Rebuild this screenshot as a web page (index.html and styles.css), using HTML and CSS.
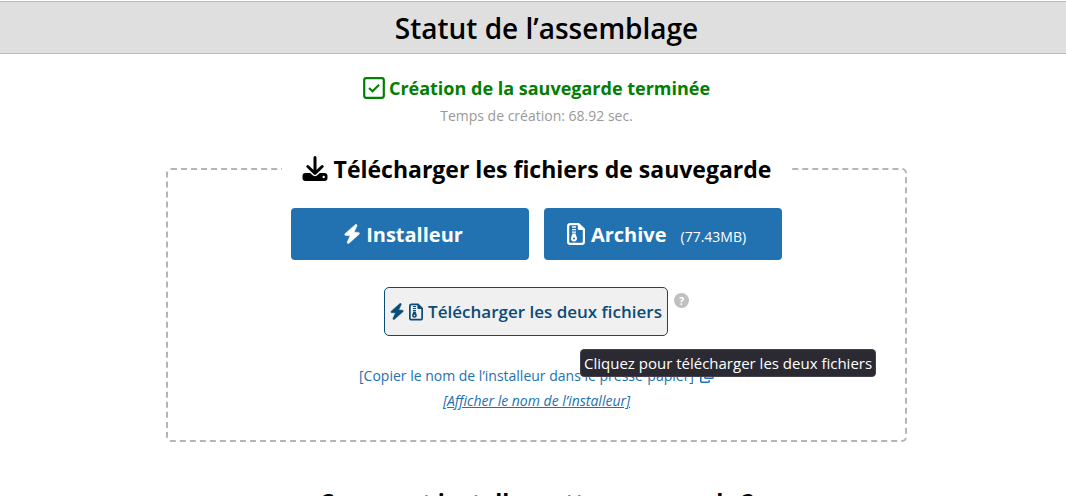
FILE: index.html
```html
<!DOCTYPE html>
<html lang="fr">
  <head>
    <meta charset="UTF-8" />
    <meta name="viewport" content="width=device-width, initial-scale=1.0" />
    <title>Statut de l’assemblage</title>
    <link rel="stylesheet" href="styles.css">
  </head>
  <body>
    <!-- Shared icons -->
    <svg class="icon-defs" aria-hidden="true">
      <symbol id="icon-bolt" viewBox="0 0 16 20">
        <path d="M11.5 0.5 L1.2 9.6 Q0 11 1.6 11.4 L6.2 11.6 L3.2 18.2 Q3.1 20 5 19.2 L15 10.3 Q16.2 9 14.6 8.4 L10 8.2 L13 1.8 Q13.1 0 11.5 0.5 Z" fill="currentColor" stroke="currentColor" stroke-width="0.6" />
      </symbol>
      <symbol id="icon-archive" viewBox="0 0 18 22">
        <path d="M3.3 1.1 H11.5 L16.9 6.3 V18.7 Q16.9 20.9 14.7 20.9 H3.3 Q1.1 20.9 1.1 18.7 V3.3 Q1.1 1.1 3.3 1.1 Z" fill="none" stroke="currentColor" stroke-width="2.2" />
        <path d="M10.8 1 L17 7 H12 Q10.8 7 10.8 5.8 Z" fill="currentColor" />
        <path d="M5 4 H9 M5 6.6 H9 M5 9.2 H9" stroke="currentColor" stroke-width="1.3" />
        <path d="M5.5 10.5 H8.5 L10 15 Q10.2 18.4 7 18.4 Q3.8 18.4 4 15 Z M7 14.4 A1 1 0 1 0 7 16.4 A1 1 0 1 0 7 14.4 Z" fill="currentColor" fill-rule="evenodd" />
      </symbol>
    </svg>

    <header class="page-header">
      <h1>Statut de l’assemblage</h1>
    </header>

    <main class="content">
      <div class="build-status">
        <h2>
          <svg class="icon-check" viewBox="0 0 22 22" aria-hidden="true">
            <rect x="1.2" y="1.2" width="19.6" height="19.6" rx="2" fill="none" stroke="currentColor" stroke-width="2.2" />
            <path d="M6 11 L9.5 14.3 L16 7.8" fill="none" stroke="currentColor" stroke-width="2" />
          </svg>
          Création de la sauvegarde terminée
        </h2>
        <p><strong>Temps de création:</strong> 68.92 sec.</p>
      </div>

      <fieldset class="download-box">
        <legend>
          <svg class="icon-download" viewBox="0 0 26 26" aria-hidden="true">
            <path d="M13 1.5 V17 M5.8 10.5 L13 17.3 L20.2 10.5" fill="none" stroke="currentColor" stroke-width="3" stroke-linecap="round" stroke-linejoin="round" />
            <path d="M3.5 17 H8.2 L11 19.6 Q13 21 15 19.6 L17.8 17 H22.5 Q25.5 17.2 25.5 20 V22 Q25.5 25 22.5 25 H3.5 Q0.5 25 0.5 22 V20 Q0.5 17.2 3.5 17 Z M21.7 19.8 A1.2 1.2 0 1 0 21.7 22.2 A1.2 1.2 0 1 0 21.7 19.8 Z" fill="currentColor" fill-rule="evenodd" />
          </svg>
          Télécharger les fichiers de sauvegarde
        </legend>

        <div class="download-buttons">
          <button type="button" class="btn-primary">
            <svg class="icon-bolt" aria-hidden="true"><use href="#icon-bolt" /></svg>
            Installeur
          </button>
          <button type="button" class="btn-primary">
            <svg class="icon-archive" aria-hidden="true"><use href="#icon-archive" /></svg>
            Archive
            <span class="file-size">(77.43MB)</span>
          </button>
        </div>

        <div class="download-both">
          <button type="button" class="btn-both" aria-describedby="both-tip">
            <svg class="icon-bolt" aria-hidden="true"><use href="#icon-bolt" /></svg>
            <svg class="icon-archive" aria-hidden="true"><use href="#icon-archive" /></svg>
            Télécharger les deux fichiers
          </button>
          <span class="help">?</span>
          <span class="tooltip" id="both-tip" role="tooltip">Cliquez pour télécharger les deux fichiers</span>
        </div>

        <div class="installer-links">
          <a href="#" class="copy-link">[Copier le nom de l’installeur dans le presse-papier]
            <svg class="icon-copy" viewBox="0 0 14 14" aria-hidden="true">
              <rect x="4.8" y="0.8" width="8.4" height="8.4" rx="1" fill="none" stroke="currentColor" stroke-width="1.6" />
              <path d="M2.8 4.8 H1.8 Q0.8 4.8 0.8 5.8 V12.2 Q0.8 13.2 1.8 13.2 H8.2 Q9.2 13.2 9.2 12.2 V11.2" fill="none" stroke="currentColor" stroke-width="1.6" />
            </svg>
          </a>
          <a href="#" class="show-link">[Afficher le nom de l’installeur]</a>
        </div>
      </fieldset>

      <h2 class="install-title">Comment installer cette sauvegarde ?</h2>
    </main>
  </body>
</html>
```
FILE: styles.css
```css
/* Reset */
* {
  margin: 0;
  padding: 0;
  box-sizing: border-box;
}

html {
  overflow: hidden;
}

body {
  font-family: "Segoe UI", "Open Sans", "Noto Sans", sans-serif;
  font-size: 14px;
  color: #000;
  background-color: #fff;
}

button {
  font-family: inherit;
  cursor: pointer;
}

.icon-defs {
  display: none;
}

.page-header {
  margin-top: 1px;
  padding: 2px 0 0 27px;
  background-color: #dfdfdf;
  border-top: 1px solid #bbb;
  border-bottom: 1px solid #bbb;
  text-align: center;
}

h1 {
  font-size: 28px;
  line-height: 49px;
  font-weight: 600;
}

.content {
  padding: 20px 0 0 7px;
}

.build-status {
  text-align: center;
}

.build-status h2 {
  display: flex;
  justify-content: center;
  align-items: center;
  gap: 4px;
  color: #008000;
  font-size: 18px;
  line-height: 28px;
  font-weight: 700;
}

.icon-check {
  width: 22px;
  height: 22px;
}

.build-status p {
  color: #999;
  line-height: 28px;
}

.build-status strong {
  font-weight: 500;
}

/* Download box */
.download-box {
  width: 70%;
  max-width: 741px;
  margin: 22px auto 0;
  padding: 23px 0 27px;
  border: 2px dashed #b5b5b5;
  border-radius: 5px;
}

.download-box legend {
  display: flex;
  align-items: center;
  gap: 6px;
  margin: 0 auto;
  padding: 1px 20px 0;
  font-size: 23px;
  line-height: 32px;
  font-weight: 700;
}

.icon-download {
  width: 26px;
  height: 26px;
}

.download-buttons {
  display: flex;
  justify-content: center;
  gap: 15px;
}

.btn-primary {
  display: flex;
  justify-content: center;
  align-items: center;
  gap: 6px;
  width: 238px;
  height: 52px;
  padding-right: 13px;
  border: none;
  border-radius: 4px;
  background-color: #2271b1;
  color: #fff;
  font-size: 20px;
  font-weight: 700;
}

.icon-bolt {
  width: 16px;
  height: 20px;
}

.icon-archive {
  width: 18px;
  height: 22px;
}

.file-size {
  padding: 4px 0 0 8px;
  font-size: 14px;
  font-weight: 400;
}

.download-both {
  position: relative;
  display: flex;
  justify-content: center;
  align-items: flex-start;
  gap: 6px;
  width: fit-content;
  margin: 27px auto 0;
}

.btn-both {
  display: flex;
  justify-content: center;
  align-items: center;
  gap: 5px;
  min-width: 284px;
  height: 49px;
  padding: 0 4px;
  border: 1px solid #0a4b78;
  border-radius: 5px;
  background-color: #f0f0f0;
  color: #0a4b78;
  font-size: 17px;
  font-weight: 600;
  white-space: nowrap;
}

.btn-both .icon-bolt {
  width: 14px;
  height: 17px;
}

.btn-both .icon-archive {
  width: 14px;
  height: 18px;
}

.help {
  width: 15px;
  height: 15px;
  margin-top: 6px;
  border-radius: 50%;
  background-color: #c0c0c0;
  color: #fff;
  font-size: 11px;
  line-height: 15px;
  font-weight: 700;
  text-align: center;
}

.tooltip {
  position: absolute;
  top: 62px;
  left: 196px;
  padding: 0 3px;
  border: 1px solid #42414d;
  border-radius: 4px;
  background-color: #2b2a33;
  color: #fff;
  font-size: 15px;
  line-height: 26px;
  white-space: nowrap;
}

.installer-links {
  display: flex;
  flex-direction: column;
  align-items: center;
  margin-top: 27px;
  line-height: 25px;
}

.installer-links a {
  color: #2271b1;
}

.copy-link {
  display: flex;
  align-items: center;
  gap: 6px;
  text-decoration: none;
}

.icon-copy {
  width: 14px;
  height: 14px;
}

.show-link {
  font-style: italic;
}

.install-title {
  margin-top: 44px;
  font-size: 23px;
  line-height: 32px;
  font-weight: 700;
  text-align: center;
}
```
